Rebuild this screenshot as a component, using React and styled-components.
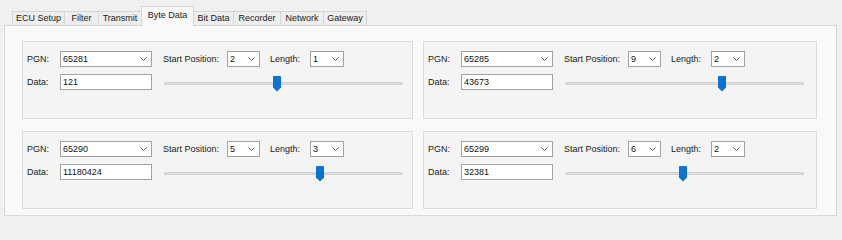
import React from 'react';
import styled, { createGlobalStyle } from 'styled-components';

// ─── Data ─────────────────────────────────────────────────────────────────────
const TABS = [
  { label: 'ECU Setup', width: 53 },
  { label: 'Filter', width: 35 },
  { label: 'Transmit', width: 44 },
  { label: 'Byte Data', width: 53, active: true },
  { label: 'Bit Data', width: 41 },
  { label: 'Recorder', width: 48 },
  { label: 'Network', width: 44 },
  { label: 'Gateway', width: 44 },
];

const SLOTS = [
  { pgn: '65281', start: '2', length: '1', data: '121', pos: 0.472 },
  { pgn: '65285', start: '9', length: '2', data: '43673', pos: 0.662 },
  { pgn: '65290', start: '5', length: '3', data: '11180424', pos: 0.658 },
  { pgn: '65299', start: '6', length: '2', data: '32381', pos: 0.494 },
];

const TRACK_W = 239;
const THUMB_W = 8;

// ─── Global ───────────────────────────────────────────────────────────────────
const GlobalStyle = createGlobalStyle`
  html, body {
    margin: 0;
    background: #f0f0f0;
  }
  body {
    font-family: "Liberation Sans", Arial, sans-serif;
    font-size: 9px;
    color: #1a1a1a;
  }
  * { box-sizing: border-box; }
`;

// ─── Styled components ────────────────────────────────────────────────────────
const Window = styled.div`
  width: 842px;
  height: 225px;
  padding: 6px 0 0 4px;
`;

const TabStrip = styled.div`
  display: flex;
  align-items: flex-end;
  height: 20px;
  padding-left: 8px;
  margin-bottom: -1px;
  position: relative;
  z-index: 1;
`;

const Tab = styled.div`
  width: ${({ $width }) => $width}px;
  height: ${({ $active }) => ($active ? '20px' : '15px')};
  margin-left: -1px;
  display: flex;
  align-items: center;
  justify-content: center;
  padding-bottom: ${({ $active }) => ($active ? '3px' : '2px')};
  border: 1px solid #d6d6d6;
  border-bottom: ${({ $active }) => ($active ? 'none' : '1px solid #d6d6d6')};
  background: ${({ $active }) => ($active ? '#f9f9f9' : '#eeeeee')};
  white-space: nowrap;
  color: #1a1a1a;

  &:first-child { margin-left: 0; }
`;

const Panel = styled.div`
  width: 833px;
  height: 191px;
  border: 1px solid #d9d9d9;
  background: #f9f9f9;
  padding: 15px 0 0 17px;
  display: grid;
  grid-template-columns: 391px 394px;
  grid-template-rows: 78px 78px;
  column-gap: 10px;
  row-gap: 12px;
`;

const Group = styled.div`
  border: 1px solid #dcdcdc;
  background: #f4f4f4;
  padding: 9px 0 0 4px;
`;

const Row = styled.div`
  display: flex;
  align-items: flex-start;
  height: 16px;
  margin-top: ${({ $gap }) => $gap || 0}px;
`;

const Label = styled.span`
  width: ${({ $width }) => $width}px;
  margin-left: ${({ $gap }) => $gap || 0}px;
  height: 16px;
  line-height: 16px;
  flex-shrink: 0;
  white-space: nowrap;
  color: #1a1a1a;
`;

const Combo = styled.div`
  width: ${({ $width }) => $width}px;
  height: 16px;
  flex-shrink: 0;
  border: 1px solid #a2a2a2;
  background: #ffffff;
  display: flex;
  align-items: center;
  justify-content: space-between;
  padding: 0 4px 0 2px;
  color: #111;
`;

const TextBox = styled.div`
  width: 92px;
  height: 16px;
  flex-shrink: 0;
  border: 1px solid #a2a2a2;
  background: #ffffff;
  padding-left: 2px;
  line-height: 14px;
  color: #111;
`;

const Slider = styled.div`
  position: relative;
  width: ${TRACK_W}px;
  height: 16px;
  margin: 2px 0 0 12px;
  flex-shrink: 0;
`;

const Track = styled.div`
  margin-top: 6px;
  height: 3px;
  background: #dcdcdc;
  border: 1px solid #d4d4d4;
  border-radius: 1px;
`;

const Thumb = styled.svg`
  position: absolute;
  top: 0;
  display: block;
`;

// ─── Parts ────────────────────────────────────────────────────────────────────
const Chevron = () => (
  <svg width="7" height="4" viewBox="0 0 7 4">
    <polyline points="0.5,0.5 3.5,3.5 6.5,0.5" fill="none" stroke="#5a5a5a" strokeWidth="1" />
  </svg>
);

const ComboBox = ({ width, value }) => (
  <Combo $width={width}>
    <span>{value}</span>
    <Chevron />
  </Combo>
);

const ByteSlot = ({ slot }) => (
  <Group>
    <Row>
      <Label $width={33}>PGN:</Label>
      <ComboBox width={92} value={slot.pgn} />
      <Label $width={64} $gap={11}>Start Position:</Label>
      <ComboBox width={33} value={slot.start} />
      <Label $width={40} $gap={10}>Length:</Label>
      <ComboBox width={34} value={slot.length} />
    </Row>
    <Row $gap={7}>
      <Label $width={33}>Data:</Label>
      <TextBox>{slot.data}</TextBox>
      <Slider>
        <Track />
        <Thumb
          width={THUMB_W}
          height="16"
          viewBox="0 0 8 16"
          style={{ left: Math.round(slot.pos * (TRACK_W - THUMB_W)) }}
        >
          <path d="M1 0 H7 Q8 0 8 1 V11.5 L4 15.5 L0 11.5 V1 Q0 0 1 0 Z" fill="#0a74d4" />
        </Thumb>
      </Slider>
    </Row>
  </Group>
);

// ─── Component ────────────────────────────────────────────────────────────────
export default function App() {
  return (
    <>
      <GlobalStyle />
      <Window>
        <TabStrip>
          {TABS.map((t) => (
            <Tab key={t.label} $width={t.width} $active={t.active}>
              {t.label}
            </Tab>
          ))}
        </TabStrip>
        <Panel>
          {SLOTS.map((s) => (
            <ByteSlot key={s.pgn} slot={s} />
          ))}
        </Panel>
      </Window>
    </>
  );
}
